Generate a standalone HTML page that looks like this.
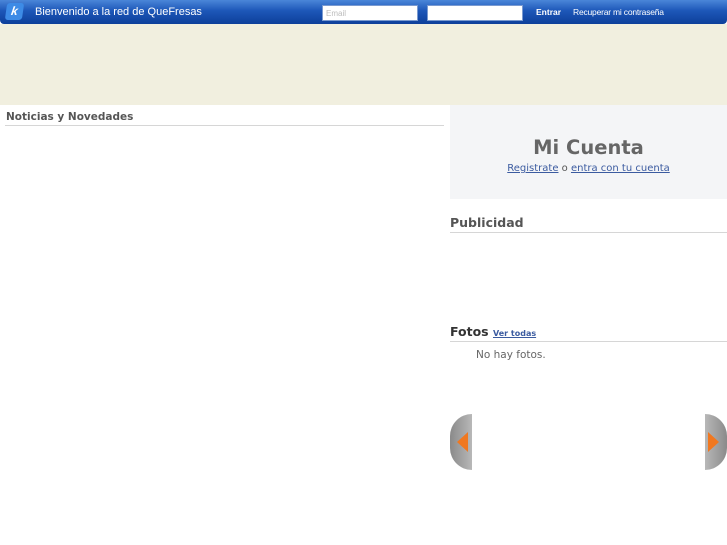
<!DOCTYPE html>
<html><head><meta charset="utf-8"><style>
*{margin:0;padding:0;box-sizing:border-box}
body{width:727px;height:545px;background:#fff;font-family:"DejaVu Sans",sans-serif;position:relative;overflow:hidden}
.bar{position:absolute;left:0;top:0;width:727px;height:24px;background:linear-gradient(#4a86d8,#1d57b8 45%,#0d3f9a);border-radius:0 0 4px 4px}
.tan{position:absolute;left:0;top:24px;width:727px;height:81px;background:#f1efdf}
.logo{position:absolute;left:6px;top:3px;width:17px;height:17px;background:#3d8be6;border-radius:3px;transform:skewX(-8deg);color:#fff;font:bold italic 12px "Liberation Sans",sans-serif;text-align:center;line-height:17px}
.t{position:absolute;color:#fff;font-family:"Liberation Sans",sans-serif}
.in{position:absolute;top:5px;width:96px;height:16px;background:#fff;border:1px solid #7a9ad0;font:8px "Liberation Sans",sans-serif;color:#bbb;padding:3px 3px}
a{color:#3b5ba0}
.h{position:absolute;color:#555;font-weight:bold}
.line{position:absolute;height:1px;background:#d6d6d6}
.arrow{position:absolute;top:414px;width:22px;height:56px;background:linear-gradient(90deg,#8a8a8a,#b8b8b8)}
</style></head><body>
<div class="bar"></div>
<div class="logo">k</div>
<div class="t" style="left:35px;top:6px;font-size:11px">Bienvenido a la red de QueFresas</div>
<div class="in" style="left:322px">Email</div>
<div class="in" style="left:427px"></div>
<div class="t" style="left:536px;top:7px;font-size:8.5px;font-weight:bold">Entrar</div>
<div class="t" style="left:573px;top:7px;font-size:8.5px;letter-spacing:-0.2px">Recuperar mi contraseña</div>
<div class="tan"></div>
<div class="h" style="left:6px;top:111px;font-size:10.5px">Noticias y Novedades</div>
<div class="line" style="left:5px;top:125px;width:439px"></div>
<div style="position:absolute;left:450px;top:105px;width:277px;height:94px;background:#f4f5f7"></div>
<div class="h" style="left:450px;width:277px;text-align:center;top:136px;font-size:19.5px;color:#666">Mi Cuenta</div>
<div style="position:absolute;left:450px;width:277px;text-align:center;top:163px;font-size:10px;color:#555"><a href="#">Registrate</a> o <a href="#">entra con tu cuenta</a></div>
<div class="h" style="left:450px;top:215px;font-size:12.5px;color:#555">Publicidad</div>
<div class="line" style="left:450px;top:232px;width:277px"></div>
<div class="h" style="left:450px;top:324px;font-size:12.5px;color:#333">Fotos <a href="#" style="font-size:8px;font-weight:bold">Ver todas</a></div>
<div class="line" style="left:450px;top:341px;width:277px"></div>
<div style="position:absolute;left:476px;top:349px;font-size:10.5px;color:#666">No hay fotos.</div>
<div class="arrow" style="left:450px;border-radius:22px 0 0 22px"></div>
<div style="position:absolute;left:457px;top:432px;border-right:11px solid #f07820;border-top:10px solid transparent;border-bottom:10px solid transparent"></div>
<div class="arrow" style="left:705px;border-radius:0 22px 22px 0;background:linear-gradient(90deg,#b8b8b8,#8a8a8a)"></div>
<div style="position:absolute;left:708px;top:432px;border-left:11px solid #f07820;border-top:10px solid transparent;border-bottom:10px solid transparent"></div>
</body></html>
